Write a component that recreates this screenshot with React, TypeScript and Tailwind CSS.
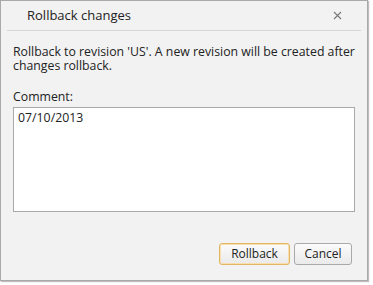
import React from 'react';

const font = { fontFamily: '"Open Sans", "Noto Sans", sans-serif' };

export default function App() {
  return (
    <div className="w-[373px] h-[285px] bg-white" style={font}>
      <div className="flex flex-col w-[368px] h-[281px] bg-[#f2f2f2] border border-[#a9a9a9] shadow-[1px_1px_1px_rgba(0,0,0,0.25)]">
        <header className="flex items-center justify-between h-[30px] pl-[20px] pr-[19px] mx-[6px] border-b border-[#d6d6d6]">
          <span className="text-[13px] leading-none text-[#222]">Rollback changes</span>
          <svg width="9" height="9" viewBox="0 0 9 9" className="text-[#777]">
            <path d="M1 1L8 8M8 1L1 8" stroke="currentColor" strokeWidth="1.1" />
          </svg>
        </header>
        <div className="flex flex-col px-[12px] pt-[14px] text-[12.3px] leading-[14px] text-[#222]">
          <p>Rollback to revision 'US'. A new revision will be created after changes rollback.</p>
          <label className="mt-[17px]">Comment:</label>
          <div className="mt-[3px] h-[105px] bg-white border border-[#a9a9a9] px-[4px] py-[3px]">07/10/2013</div>
        </div>
        <footer className="flex justify-end gap-[4px] mt-auto mb-[15px] pr-[15px]">
          <button className="w-[71px] h-[22px] rounded-[3px] border border-[#e2b663] bg-gradient-to-b from-[#fbfbfb] to-[#eaeaea] text-[12px] text-[#222] shadow-[inset_0_0_0_1px_#f7dfae]">Rollback</button>
          <button className="w-[58px] h-[22px] rounded-[3px] border border-[#a9a9a9] bg-gradient-to-b from-[#fbfbfb] to-[#eaeaea] text-[12px] text-[#222]">Cancel</button>
        </footer>
      </div>
    </div>
  );
}
